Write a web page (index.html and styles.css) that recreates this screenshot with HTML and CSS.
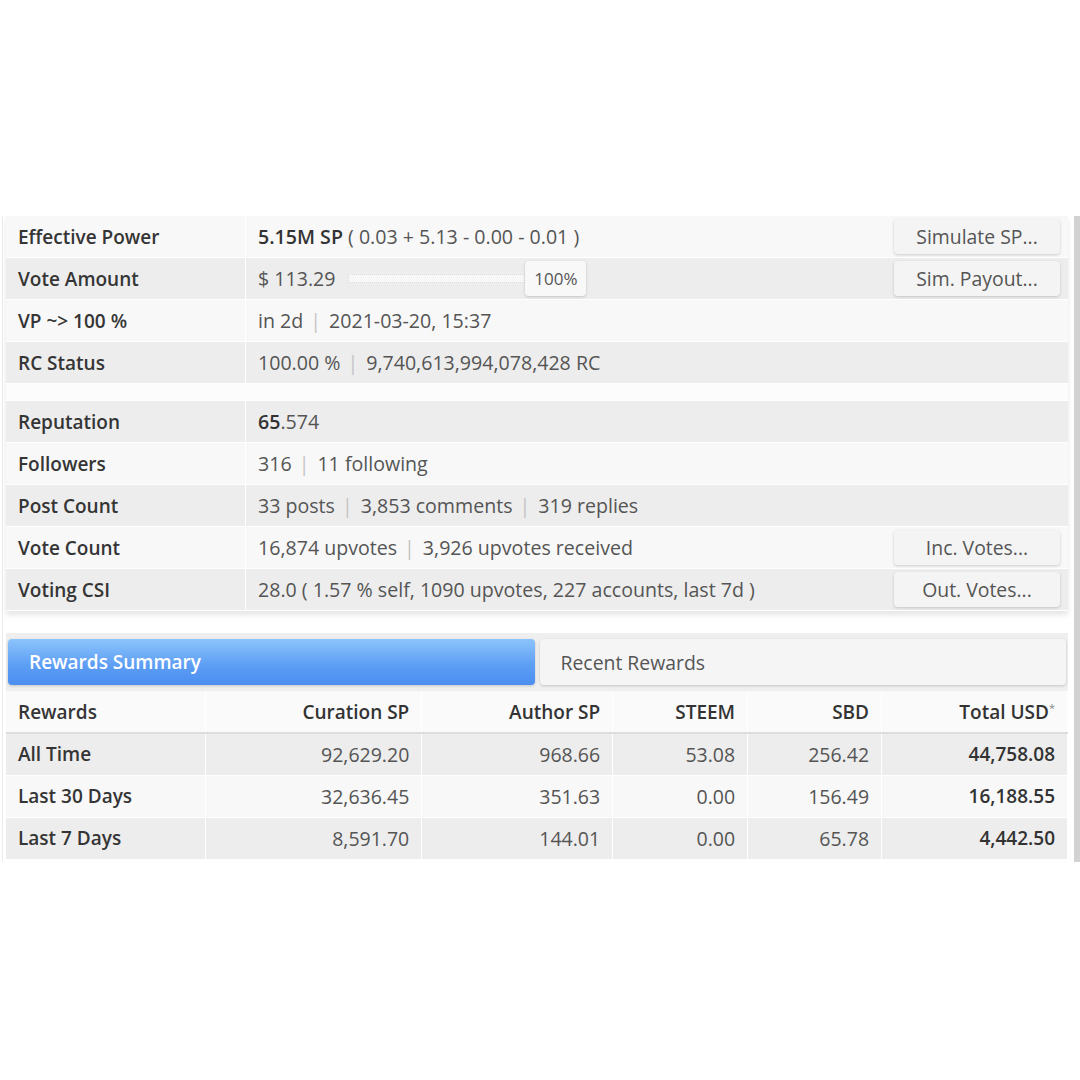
FILE: index.html
```html
<!DOCTYPE html>
<html lang="en">
  <head>
    <meta charset="UTF-8" />
    <title>Account Info</title>
    <link rel="stylesheet" href="styles.css">
  </head>
  <body>
    <div class="page">
      <div class="panel">
        <div class="info-row light">
          <div class="info-label">Effective Power</div>
          <div class="info-value"><b>5.15M SP</b>&nbsp;( 0.03 + 5.13 - 0.00 - 0.01 )</div>
          <button class="side-button">Simulate SP...</button>
        </div>
        <div class="info-row dark">
          <div class="info-label">Vote Amount</div>
          <div class="info-value">
            <span>$ 113.29</span>
            <div class="slider">
              <div class="slider-track"></div>
              <div class="slider-handle">100%</div>
            </div>
          </div>
          <button class="side-button">Sim. Payout...</button>
        </div>
        <div class="info-row light">
          <div class="info-label">VP ~&gt; 100 %</div>
          <div class="info-value">in 2d<span class="sep">|</span>2021-03-20, 15:37</div>
        </div>
        <div class="info-row dark">
          <div class="info-label">RC Status</div>
          <div class="info-value">100.00 %<span class="sep">|</span>9,740,613,994,078,428 RC</div>
        </div>

        <div class="spacer"></div>

        <div class="info-row dark">
          <div class="info-label">Reputation</div>
          <div class="info-value"><b>65</b>.574</div>
        </div>
        <div class="info-row light">
          <div class="info-label">Followers</div>
          <div class="info-value">316<span class="sep">|</span>11 following</div>
        </div>
        <div class="info-row dark">
          <div class="info-label">Post Count</div>
          <div class="info-value">33 posts<span class="sep">|</span>3,853 comments<span class="sep">|</span>319 replies</div>
        </div>
        <div class="info-row light">
          <div class="info-label">Vote Count</div>
          <div class="info-value">16,874 upvotes<span class="sep">|</span>3,926 upvotes received</div>
          <button class="side-button">Inc. Votes...</button>
        </div>
        <div class="info-row dark">
          <div class="info-label">Voting CSI</div>
          <div class="info-value">28.0 ( 1.57 % self, 1090 upvotes, 227 accounts, last 7d )</div>
          <button class="side-button">Out. Votes...</button>
        </div>
      </div>

      <div class="tab-bar">
        <div class="tab active">Rewards Summary</div>
        <div class="tab">Recent Rewards</div>
      </div>

      <table class="rewards">
        <thead>
          <tr>
            <th class="col-name">Rewards</th>
            <th class="col-curation">Curation SP</th>
            <th class="col-author">Author SP</th>
            <th class="col-steem">STEEM</th>
            <th class="col-sbd">SBD</th>
            <th class="col-total">Total USD<sup>*</sup></th>
          </tr>
        </thead>
        <tbody>
          <tr>
            <td>All Time</td>
            <td>92,629.20</td>
            <td>968.66</td>
            <td>53.08</td>
            <td>256.42</td>
            <td class="total">44,758.08</td>
          </tr>
          <tr>
            <td>Last 30 Days</td>
            <td>32,636.45</td>
            <td>351.63</td>
            <td>0.00</td>
            <td>156.49</td>
            <td class="total">16,188.55</td>
          </tr>
          <tr>
            <td>Last 7 Days</td>
            <td>8,591.70</td>
            <td>144.01</td>
            <td>0.00</td>
            <td>65.78</td>
            <td class="total">4,442.50</td>
          </tr>
        </tbody>
      </table>
    </div>
  </body>
</html>
```

FILE: styles.css
```css
* {
  padding: 0px;
  margin: 0px;
  box-sizing: border-box;
}
body {
  background-color: #ffffff;
  font-family: "Open Sans", "Liberation Sans", sans-serif;
  color: #555555;
}
.page {
  margin-top: 216px;
  margin-left: 2px;
  width: 1078px;
  padding: 0px 6px 0px 3px;
  border-left: 1px solid #ececec;
  border-right: 6px solid #d2d2d2;
  height: 646px;
  background-color: #ffffff;
}
.panel {
  display: flex;
  flex-direction: column;
  box-shadow: 0px 4px 5px rgba(0, 0, 0, 0.1);
}
.info-row {
  display: flex;
  align-items: center;
  height: 42px;
  border-bottom: 1px solid #ffffff;
}
.light {
  background-color: #f8f8f8;
}
.dark {
  background-color: #ededed;
}
.info-label {
  width: 240px;
  height: 100%;
  display: flex;
  align-items: center;
  padding: 0px 0px 0px 12px;
  border-right: 1px solid #ffffff;
  font-size: 19px;
  font-weight: 600;
  color: #353535;
}
.info-value {
  flex: 1;
  display: flex;
  align-items: center;
  padding: 0px 0px 0px 12px;
  font-size: 19.6px;
  white-space: nowrap;
}
.info-value b {
  font-weight: 600;
  color: #333333;
}
.sep {
  margin: 0px 8px 0px 7px;
  color: #c4c4c4;
}
.side-button {
  width: 166px;
  height: 35px;
  margin-right: 8px;
  border: none;
  border-radius: 4px;
  background-color: #f4f4f4;
  box-shadow: 0px 1px 3px rgba(0, 0, 0, 0.18);
  font-family: "Open Sans", "Liberation Sans", sans-serif;
  font-size: 19.4px;
  color: #555555;
}
.slider {
  display: flex;
  align-items: center;
  margin-left: 13px;
}
.slider-track {
  width: 177px;
  height: 9px;
  border: 1px dotted #d9d9d9;
  background-color: #f7f7f7;
}
.slider-handle {
  width: 61px;
  height: 35px;
  display: flex;
  align-items: center;
  justify-content: center;
  border-radius: 4px;
  background-color: #f8f8f8;
  box-shadow: 0px 1px 3px rgba(0, 0, 0, 0.18);
  font-size: 17px;
  color: #555555;
}
.spacer {
  height: 17px;
  background-color: #fcfcfc;
  border-bottom: 1px solid #ffffff;
}
.tab-bar {
  display: flex;
  gap: 5px;
  margin-top: 22px;
  padding: 6px 2px 6px 2px;
  background-color: #efefef;
}
.tab {
  flex: 1;
  height: 46px;
  display: flex;
  align-items: center;
  padding-left: 21px;
  border-radius: 4px;
  background-color: #f5f5f5;
  box-shadow: 0px 1px 3px rgba(0, 0, 0, 0.18);
  font-size: 19.4px;
  color: #555555;
}
.active {
  background: linear-gradient(#8cc4fb, #5b9cf4 60%, #4b8ef0);
  color: #ffffff;
  font-weight: 600;
  font-size: 19px;
}
.rewards {
  width: 1062px;
  border-collapse: collapse;
  font-size: 19.5px;
}
.rewards th {
  height: 42px;
  padding: 0px 12px;
  text-align: right;
  font-size: 19px;
  font-weight: 600;
  color: #333333;
  background-color: #fafafa;
  border-bottom: 2px solid #dddddd;
  border-right: 1px solid #ffffff;
}
.rewards td {
  height: 42px;
  padding: 0px 12px;
  text-align: right;
  border-right: 1px solid #ffffff;
  border-bottom: 1px solid #ffffff;
}
.rewards th:first-child,
.rewards td:first-child {
  text-align: left;
  color: #353535;
  font-size: 19px;
  font-weight: 600;
}
.rewards tbody tr:nth-child(odd) {
  background-color: #ededed;
}
.rewards tbody tr:nth-child(even) {
  background-color: #f8f8f8;
}
.rewards sup {
  font-size: 11px;
  font-weight: 400;
  color: #888888;
}
.total {
  font-size: 19px;
  font-weight: 600;
  color: #333333;
}
.col-name {
  width: 200px;
}
.col-curation {
  width: 216px;
}
.col-author {
  width: 191px;
}
.col-steem {
  width: 135px;
}
.col-sbd {
  width: 134px;
}
.col-total {
  width: 186px;
}
```
